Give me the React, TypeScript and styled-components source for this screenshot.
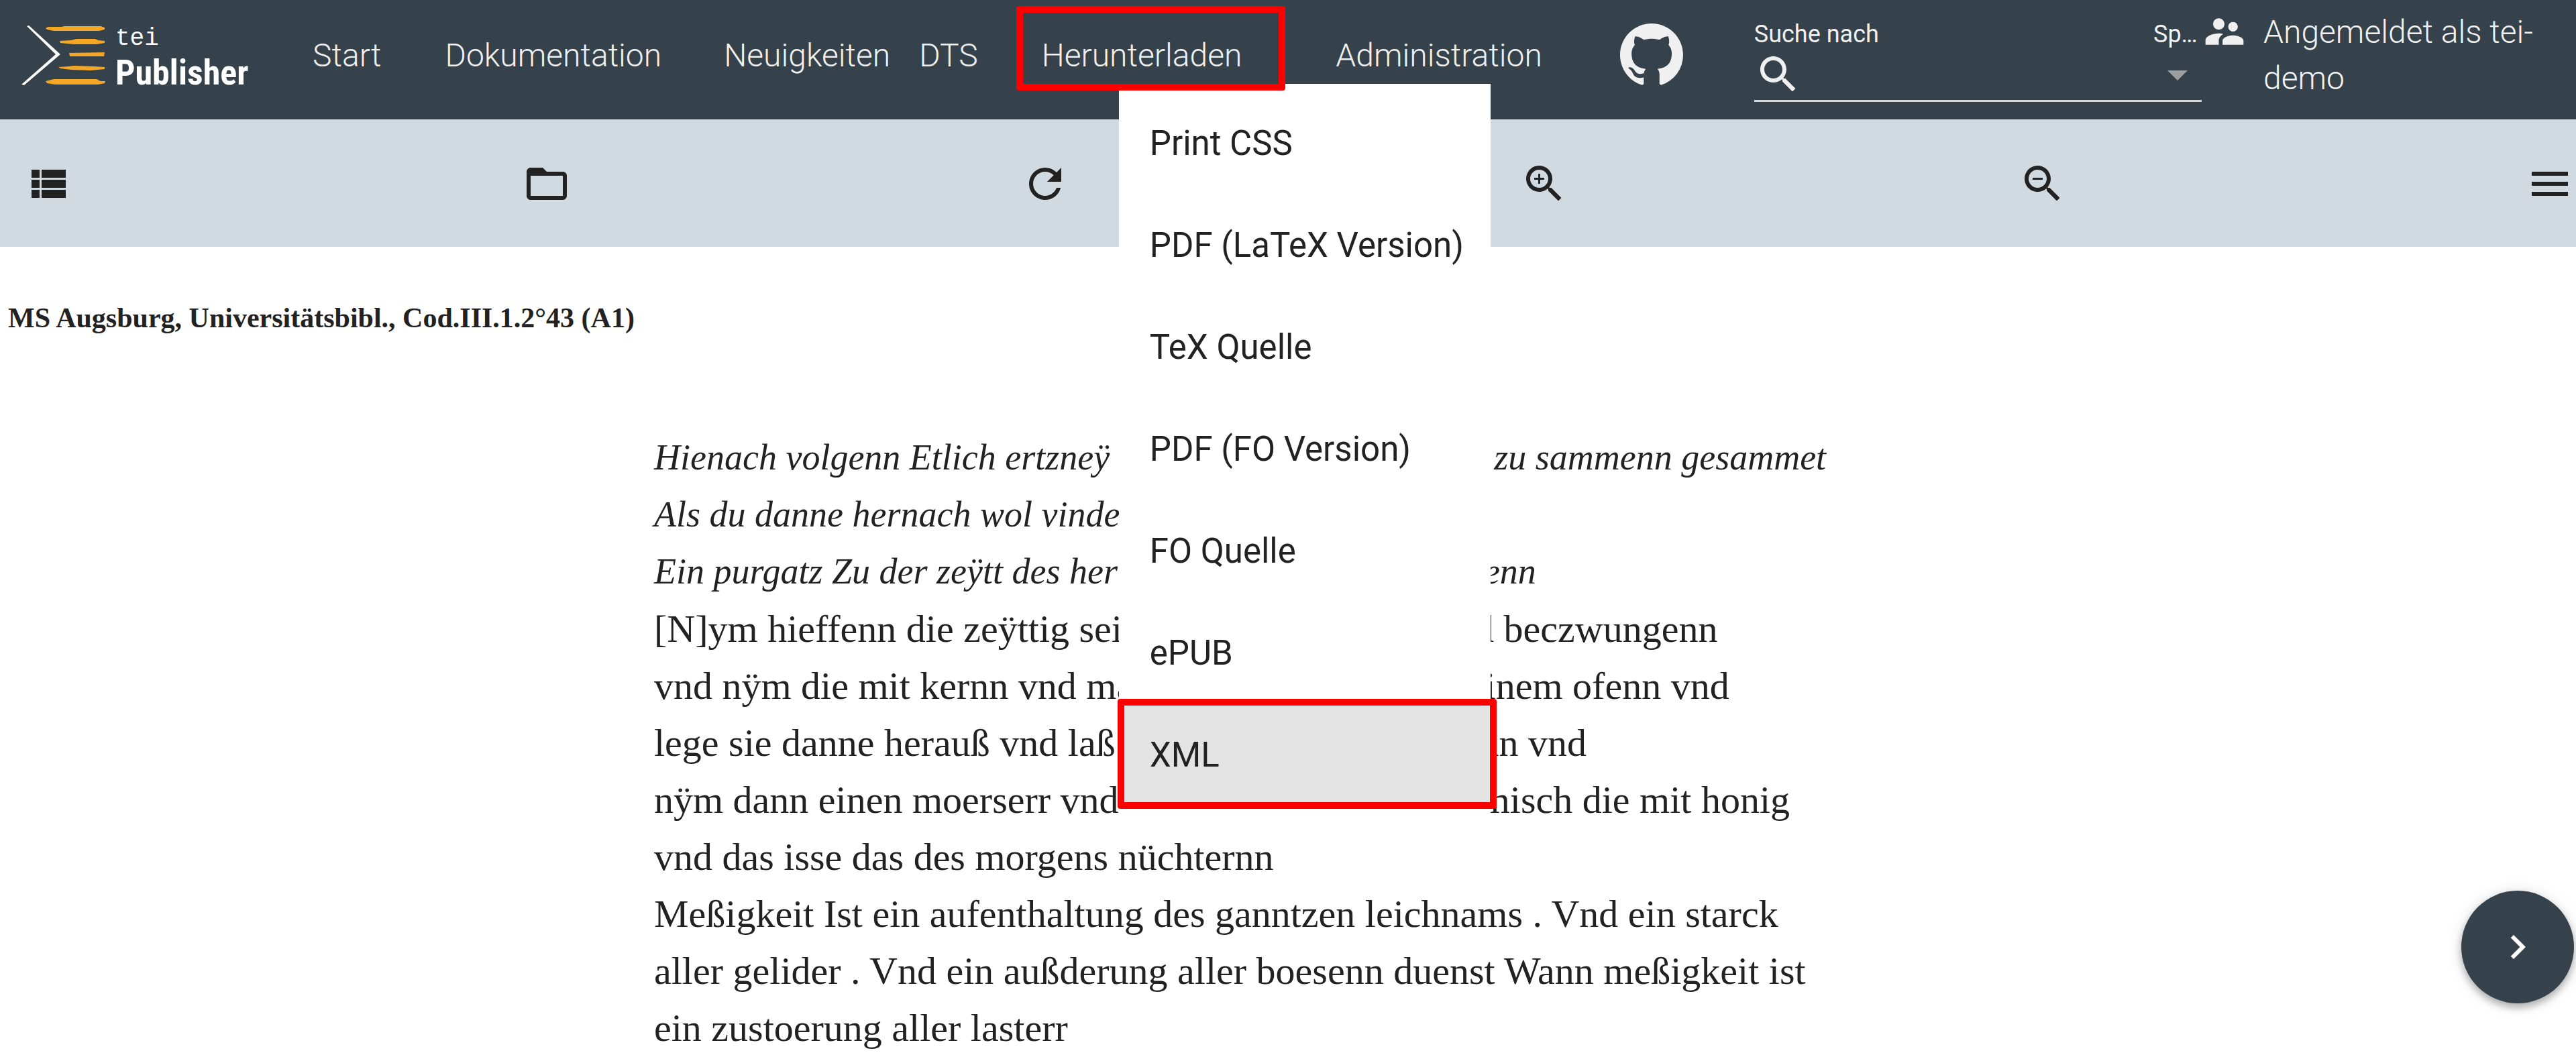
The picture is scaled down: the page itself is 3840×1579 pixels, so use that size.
import React from "react";
import styled, { createGlobalStyle, css } from "styled-components";

const color = {
  bar: "#35424b",
  tools: "#d1d9e1",
  onBar: "#f0f0f0",
  ink: "#222222",
  accent: "#f5a623",
  mark: "#ff0000",
  hover: "#e3e3e3",
};

const GlobalStyle = createGlobalStyle`
  *, *::before, *::after { box-sizing: border-box; }
  body {
    margin: 0;
    background: #ffffff;
    color: ${color.ink};
    font-family: Roboto, "Liberation Sans", sans-serif;
  }
`;

const Header = styled.header`
  display: flex;
  align-items: center;
  padding: 12px 0 26px 32px;
  height: 178px;
  background: ${color.bar};
  color: ${color.onBar};
`;

const Brand = styled.a`
  display: flex;
  align-items: center;
  gap: 14px;
  width: 434px;
  flex: none;
  color: #ffffff;
  text-decoration: none;
`;

const BrandMark = styled.svg`
  width: 126px;
  height: 90px;
  flex: none;
`;

const BrandText = styled.span`
  display: flex;
  flex-direction: column;
  padding-top: 8px;
`;

const BrandTop = styled.span`
  font: 400 36px/46px "Liberation Mono", monospace;
`;

const BrandName = styled.span`
  font: 700 52px/56px "Roboto Condensed", "Liberation Sans Narrow", "Liberation Sans", sans-serif;
`;

const Nav = styled.nav`
  display: flex;
  align-items: center;
  flex: none;
`;

const NavItem = styled.div<{ $gap: number }>`
  position: relative;
  margin-right: ${(p) => p.$gap}px;
`;

const navText = css`
  color: inherit;
  font: 300 48px/69px Roboto, "Liberation Sans", sans-serif;
  text-decoration: none;
  white-space: nowrap;
`;

const NavLink = styled.a`
  ${navText}
`;

const NavButton = styled.button`
  ${navText}
  display: block;
  padding: 0;
  border: 0;
  background: none;
`;

const Frame = styled.span<{ $inset: string }>`
  position: absolute;
  inset: ${(p) => p.$inset};
  z-index: 3;
  border: 10px solid ${color.mark};
  border-radius: 4px;
  pointer-events: none;
`;

const Menu = styled.ul`
  position: absolute;
  top: 77px;
  left: 115px;
  z-index: 2;
  width: 554px;
  margin: 0;
  padding: 13px 0;
  background: #ffffff;
  list-style: none;
`;

const MenuItem = styled.li`
  position: relative;
`;

const MenuLink = styled.a<{ $active: boolean }>`
  display: block;
  padding: 0 46px;
  background: ${(p) => (p.$active ? color.hover : "transparent")};
  color: ${color.ink};
  font-size: 51px;
  line-height: 152px;
  text-decoration: none;
  white-space: nowrap;
`;

const GithubLink = styled.a`
  display: flex;
  flex: none;
  margin-right: 106px;
  color: inherit;
`;

const Search = styled.form`
  display: flex;
  flex: 1;
  min-width: 0;
  align-self: flex-end;
  border-bottom: 3px solid #d3d6d9;
`;

const Field = styled.div<{ $wide: boolean }>`
  display: flex;
  flex-direction: column;
  min-width: 0;
  ${(p) => (p.$wide ? "flex: 1;" : "flex: none; width: 72px;")}
`;

const FieldLabel = styled.label`
  overflow: hidden;
  font-size: 36px;
  line-height: 44px;
  text-overflow: ellipsis;
  white-space: nowrap;
`;

const FieldRow = styled.div`
  display: grid;
  grid-template-columns: 72px 1fr;
  align-items: center;
  height: 76px;
`;

const SearchInput = styled.input`
  width: 100%;
  min-width: 0;
  padding: 0 12px;
  border: 0;
  outline: 0;
  background: transparent;
  color: inherit;
  font: 400 48px/69px Roboto, sans-serif;
`;

const PickRow = styled.div`
  display: grid;
  height: 76px;
  align-items: center;
  color: #9e9e9e;

  > * {
    grid-area: 1 / 1;
  }
  > svg {
    pointer-events: none;
  }
`;

const Pick = styled.select`
  width: 72px;
  height: 72px;
  border: 0;
  appearance: none;
  background: transparent;
  color: transparent;
`;

const User = styled.a`
  display: flex;
  flex: none;
  gap: 24px;
  width: 558px;
  color: inherit;
  text-decoration: none;
`;

const UserName = styled.span`
  width: 440px;
  font: 300 48px/69px Roboto, "Liberation Sans", sans-serif;
`;

const Toolbar = styled.div`
  display: flex;
  align-items: center;
  height: 190px;
  padding: 2px 3px 0 35px;
  background: ${color.tools};
`;

const ToolSlot = styled.div<{ $last: boolean }>`
  ${(p) => (p.$last ? "flex: none; padding-left: 12px;" : "flex: 1;")}
`;

const ToolButton = styled.button`
  display: block;
  padding: 0;
  border: 0;
  background: none;
  color: ${color.ink};
`;

const Icon = styled.svg<{ $size: number }>`
  display: block;
  flex: none;
  width: ${(p) => p.$size}px;
  height: ${(p) => p.$size}px;
  fill: currentColor;
`;

const Main = styled.main`
  padding: 76px 12px 3px;
  font-family: Junicode, "Liberation Serif", serif;
`;

const Title = styled.h1`
  margin: 0 0 136px;
  font-size: 42px;
  font-weight: 700;
  line-height: 60px;
`;

const Text = styled.div`
  max-width: 1890px;
  margin: 0 auto;
`;

const Line = styled.p<{ $italic: boolean }>`
  margin: 0;
  font-size: ${(p) => (p.$italic ? 54 : 58)}px;
  font-style: ${(p) => (p.$italic ? "italic" : "normal")};
  line-height: 85px;
  white-space: nowrap;
`;

const NextButton = styled.button`
  position: fixed;
  right: 3px;
  bottom: 83px;
  z-index: 1;
  display: grid;
  place-items: center;
  width: 168px;
  height: 168px;
  padding: 0;
  border: 0;
  border-radius: 50%;
  background: ${color.bar};
  color: #ffffff;
  box-shadow: 0 6px 12px rgba(0, 0, 0, 0.28), 0 2px 24px rgba(0, 0, 0, 0.12);
`;

const paths = {
  list: "M4 14h4v-4H4v4zm0 5h4v-4H4v4zM4 9h4V5H4v4zm5 5h12v-4H9v4zm0 5h12v-4H9v4zM9 5v4h12V5H9z",
  folder:
    "M20 6h-8l-2-2H4c-1.1 0-1.99.9-1.99 2L2 18c0 1.1.9 2 2 2h16c1.1 0 2-.9 2-2V8c0-1.1-.9-2-2-2zm0 12H4V8h16v10z",
  refresh:
    "M17.65 6.35C16.2 4.9 14.21 4 12 4c-4.42 0-7.99 3.58-7.99 8s3.57 8 7.99 8c3.73 0 6.84-2.55 7.73-6h-2.08c-.82 2.33-3.04 4-5.65 4-3.31 0-6-2.69-6-6s2.69-6 6-6c1.66 0 3.14.69 4.22 1.78L13 11h7V4l-2.35 2.35z",
  search:
    "M15.5 14h-.79l-.28-.27C15.41 12.59 16 11.11 16 9.5 16 5.91 13.09 3 9.5 3S3 5.91 3 9.5 5.91 16 9.5 16c1.61 0 3.09-.59 4.23-1.57l.27.28v.79l5 4.99L20.49 19l-4.99-5zm-6 0C7.01 14 5 11.99 5 9.5S7.01 5 9.5 5 14 7.01 14 9.5 11.99 14 9.5 14z",
  plus: "M12 10h-2v2H9v-2H7V9h2V7h1v2h2v1z",
  minus: "M7 9h5v1H7z",
  menu: "M3 18h18v-2H3v2zm0-5h18v-2H3v2zm0-7v2h18V6H3z",
  drop: "M7 10l5 5 5-5z",
  next: "M10 6L8.59 7.41 13.17 12l-4.58 4.59L10 18l6-6z",
  people:
    "M16.5 12c1.38 0 2.49-1.12 2.49-2.5S17.88 7 16.5 7C15.12 7 14 8.12 14 9.5s1.12 2.5 2.5 2.5zM9 11c1.66 0 2.99-1.34 2.99-3S10.66 5 9 5C7.34 5 6 6.34 6 8s1.34 3 3 3zm7.5 3c-1.83 0-5.5.92-5.5 2.75V19h11v-2.25c0-1.83-3.67-2.75-5.5-2.75zM9 13c-2.33 0-7 1.17-7 3.5V19h7v-2.25c0-.85.33-2.34 2.37-3.47C10.5 13.1 9.66 13 9 13z",
  github:
    "M8 0C3.58 0 0 3.58 0 8c0 3.54 2.29 6.53 5.47 7.59.4.07.55-.17.55-.38 0-.19-.01-.82-.01-1.49-2.01.37-2.53-.49-2.69-.94-.09-.23-.48-.94-.82-1.13-.28-.15-.68-.52-.01-.53.63-.01 1.08.58 1.23.82.72 1.21 1.87.87 2.33.66.07-.52.28-.87.51-1.07-1.78-.2-3.64-.89-3.64-3.95 0-.87.31-1.59.82-2.15-.08-.2-.36-1.02.08-2.12 0 0 .67-.21 2.2.82.64-.18 1.32-.27 2-.27s1.36.09 2 .27c1.53-1.04 2.2-.82 2.2-.82.44 1.1.16 1.92.08 2.12.51.56.82 1.27.82 2.15 0 3.07-1.87 3.75-3.65 3.95.29.25.54.73.54 1.48 0 1.07-.01 1.93-.01 2.2 0 .21.15.46.55.38A8.01 8.01 0 0 0 16 8c0-4.42-3.58-8-8-8z",
};

function Glyph({ d, size = 72, box = 24 }: { d: string; size?: number; box?: number }) {
  return (
    <Icon $size={size} viewBox={`0 0 ${box} ${box}`} aria-hidden="true">
      <path d={d} />
    </Icon>
  );
}

const tools = [
  { label: "Inhaltsverzeichnis", d: paths.list },
  { label: "Ordner", d: paths.folder },
  { label: "Neu laden", d: paths.refresh },
  { label: "Vergrößern", d: paths.search + paths.plus },
  { label: "Verkleinern", d: paths.search + paths.minus },
  { label: "Menü", d: paths.menu },
];

const downloads = [
  "Print CSS",
  "PDF (LaTeX Version)",
  "TeX Quelle",
  "PDF (FO Version)",
  "FO Quelle",
  "ePUB",
  "XML",
];

const lines = [
  { italic: true, text: "Hienach volgenn Etlich ertzneÿ die da von den maisternn zu sammenn gesammet" },
  { italic: true, text: "Als du danne hernach wol vindenn wirst" },
  { italic: true, text: "Ein purgatz Zu der zeÿtt des herbsts vnd des gantzen maÿenn" },
  { italic: false, text: "[N]ym hieffenn die zeÿttig seinnt vnd nit werdent vnd beczwungenn" },
  { italic: false, text: "vnd nÿm die mit kernn vnd mach sie auch dürre inn einem ofenn vnd" },
  { italic: false, text: "lege sie danne herauß vnd laß sie wol kalt vnd trückenn vnd" },
  { italic: false, text: "nÿm dann einen moerserr vnd stoß sie wol klain vnd misch die mit honig" },
  { italic: false, text: "vnd das isse das des morgens nüchternn" },
  { italic: false, text: "Meßigkeit Ist ein aufenthaltung des ganntzen leichnams . Vnd ein starck" },
  { italic: false, text: "aller gelider . Vnd ein außderung aller boesenn duenst Wann meßigkeit ist" },
  { italic: false, text: "ein zustoerung aller lasterr" },
];

export default function App() {
  return (
    <>
      <GlobalStyle />
      <Header>
        <Brand href="#start">
          <BrandMark viewBox="0 0 126 90" aria-hidden="true">
            <path d="M8 2L11 1L58 44L4 90L0 89L51 44Z" fill="#ffffff" />
            <g fill={color.accent}>
              <path d="M36 5L40 3L60 3L64 2L118 2L124 4L124 7L116 9L48 9L38 7Z" />
              <path d="M57 24L74 23L82 21L110 21L114 23L124 24L124 27L112 29L78 29L58 27Z" />
              <path d="M71 42L124 41L123 47L72 47Z" />
              <path d="M55 63L70 62L78 61L108 62L124 63L124 66L104 68L74 67L58 65Z" />
              <path d="M36 84L48 81L112 81L118 84L125 84L124 87L114 89L50 89L38 87Z" />
            </g>
          </BrandMark>
          <BrandText>
            <BrandTop>tei</BrandTop>
            <BrandName>Publisher</BrandName>
          </BrandText>
        </Brand>
        <Nav>
          <NavItem $gap={95}>
            <NavLink href="#start">Start</NavLink>
          </NavItem>
          <NavItem $gap={93}>
            <NavLink href="#doc">Dokumentation</NavLink>
          </NavItem>
          <NavItem $gap={43}>
            <NavLink href="#news">Neuigkeiten</NavLink>
          </NavItem>
          <NavItem $gap={95}>
            <NavLink href="#dts">DTS</NavLink>
          </NavItem>
          <NavItem $gap={140}>
            <NavButton type="button" aria-expanded="true">
              Herunterladen
            </NavButton>
            <Frame $inset="-39px -65px -18px -38px" />
            <Menu>
              {downloads.map((name) => (
                <MenuItem key={name}>
                  <MenuLink href="#download" $active={name === "XML"}>
                    {name}
                  </MenuLink>
                  {name === "XML" && <Frame $inset="-8px -9px -4px -2px" />}
                </MenuItem>
              ))}
            </Menu>
          </NavItem>
          <NavItem $gap={116}>
            <NavLink href="#admin">Administration</NavLink>
          </NavItem>
        </Nav>
        <GithubLink href="#github" aria-label="GitHub">
          <Glyph d={paths.github} size={94} box={16} />
        </GithubLink>
        <Search>
          <Field $wide>
            <FieldLabel htmlFor="query">Suche nach</FieldLabel>
            <FieldRow>
              <Glyph d={paths.search} />
              <SearchInput id="query" type="text" />
            </FieldRow>
          </Field>
          <Field $wide={false}>
            <FieldLabel htmlFor="language">Sprache</FieldLabel>
            <PickRow>
              <Pick id="language" defaultValue="">
                <option value="" />
              </Pick>
              <Glyph d={paths.drop} />
            </PickRow>
          </Field>
        </Search>
        <User href="#user">
          <Glyph d={paths.people} size={68} />
          <UserName>Angemeldet als tei-demo</UserName>
        </User>
      </Header>
      <Toolbar>
        {tools.map((tool, i) => (
          <ToolSlot key={tool.label} $last={i === tools.length - 1}>
            <ToolButton type="button" aria-label={tool.label}>
              <Glyph d={tool.d} />
            </ToolButton>
          </ToolSlot>
        ))}
      </Toolbar>
      <Main>
        <Title>MS Augsburg, Universitätsbibl., Cod.III.1.2°43 (A1)</Title>
        <Text>
          {lines.map((line) => (
            <Line key={line.text} $italic={line.italic}>
              {line.text}
            </Line>
          ))}
        </Text>
      </Main>
      <NextButton type="button" aria-label="Nächste Seite">
        <Glyph d={paths.next} />
      </NextButton>
    </>
  );
}
